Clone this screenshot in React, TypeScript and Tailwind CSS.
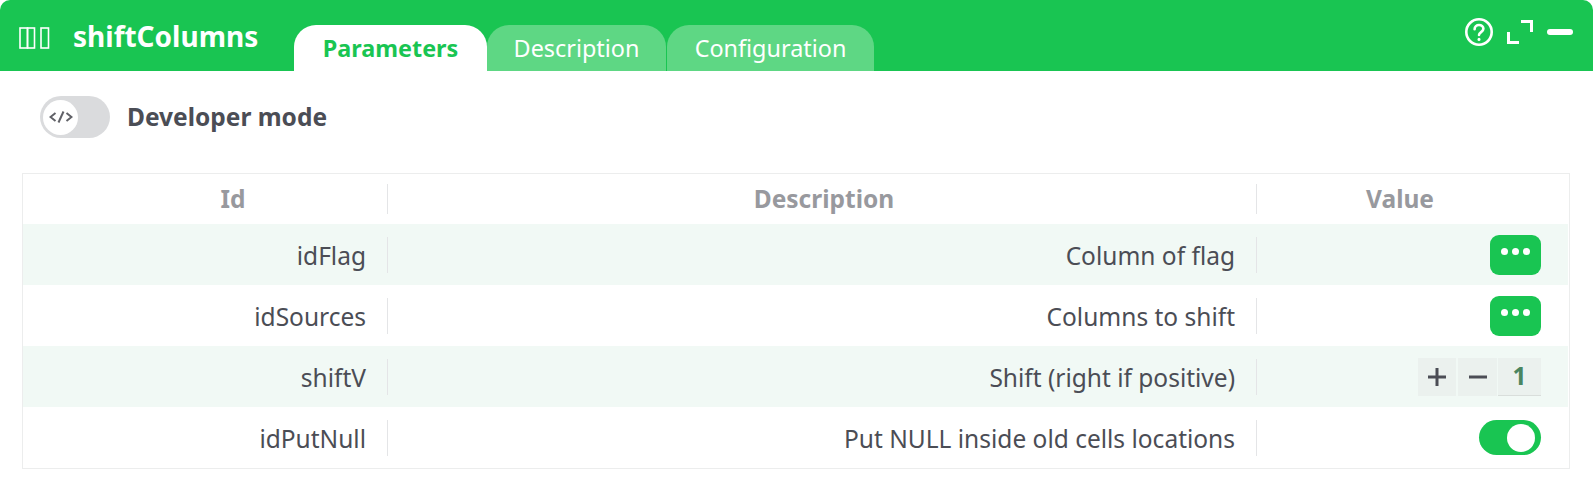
import React from "react";

const font = { fontFamily: '"Noto Sans", sans-serif' };

function Row({ id, desc, shaded, children }: { id: string; desc: string; shaded?: boolean; children: React.ReactNode }) {
  return (
    <div className={`mr-px flex h-[61px] items-center text-[24.5px] text-[#4b4d55] ${shaded ? "bg-[#f1f9f5]" : "bg-white"}`}>
      <div className="flex h-[36px] w-[365px] items-center justify-end border-r border-[#e4e5e7] pr-[21px] pt-[4px]">{id}</div>
      <div className="flex h-[36px] w-[869px] items-center justify-end border-r border-[#e4e5e7] pr-[21px] pt-[4px]">{desc}</div>
      <div className="flex flex-1 items-center justify-end pr-[27px]">{children}</div>
    </div>
  );
}

function Dots() {
  return (
    <button className="flex h-[40px] w-[51px] items-start justify-center gap-[4px] rounded-[9px] bg-[#19c552] pt-[13px]">
      <span className="h-[7px] w-[7px] rounded-full bg-white" />
      <span className="h-[7px] w-[7px] rounded-full bg-white" />
      <span className="h-[7px] w-[7px] rounded-full bg-white" />
    </button>
  );
}

export default function App() {
  return (
    <div className="h-[488px] w-[1593px] overflow-hidden bg-white" style={font}>
      <div className="flex h-[71px] items-end rounded-t-[10px] bg-[#19c552] pr-[20px]">
        <div className="flex h-full w-[294px] items-center pl-[18px] pt-[4px]">
          <svg width="32" height="24" viewBox="0 0 32 24" fill="none" stroke="white" strokeWidth="1.6">
            <rect x="2" y="2" width="7.5" height="20" />
            <rect x="9.5" y="2" width="7" height="20" />
            <rect x="23" y="2" width="7.5" height="20" />
          </svg>
          <span className="ml-[23px] -translate-y-[2px] text-[28px] font-bold text-white">shiftColumns</span>
        </div>
        <div className="flex h-[46px] w-[193px] items-center justify-center rounded-t-[22px] bg-white pt-[2px] text-[23.4px] font-bold text-[#19c552]">Parameters</div>
        <div className="flex h-[46px] w-[179px] items-center justify-center rounded-t-[22px] bg-[#5ed784] pt-[2px] text-[23.4px] text-white">Description</div>
        <div className="ml-px flex h-[46px] w-[207px] items-center justify-center rounded-t-[22px] bg-[#5ed784] pt-[2px] text-[23.4px] text-white">Configuration</div>
        <div className="flex h-full flex-1 items-start justify-end pt-[17px]">
          <svg width="30" height="30" viewBox="0 0 30 30" fill="none" stroke="white" strokeWidth="2.6" strokeLinecap="round">
            <circle cx="15" cy="15" r="12.7" />
            <path d="M10.6 12.2c0-2.6 2-4.2 4.4-4.2s4.4 1.5 4.4 3.8c0 3.4-4.4 3.2-4.4 6.2" />
            <path d="M15 22.3v.2" strokeWidth="3" />
          </svg>
          <svg width="26" height="24" viewBox="0 0 26 24" fill="none" stroke="white" strokeWidth="3" className="ml-[13px] mt-[3px]">
            <path d="M14 1.5h10.5V12" />
            <path d="M1.5 12v10.5H12" />
          </svg>
          <div className="ml-[14px] mt-[12px] h-[6px] w-[26px] rounded-full bg-white" />
        </div>
      </div>

      <div className="flex h-[102px] items-start pl-[40px] pt-[25px]">
        <div className="flex h-[42px] w-[70px] items-center rounded-full bg-[#dadbdd] pl-[3px]">
          <div className="flex h-[35px] w-[35px] items-center justify-center rounded-full bg-white">
            <svg width="24" height="14" viewBox="0 0 24 14" fill="none" stroke="#606167" strokeWidth="2">
              <path d="M6.5 3L1.5 7l5 4" />
              <path d="M14.5 1.5l-5 11" />
              <path d="M17.5 3l5 4-5 4" />
            </svg>
          </div>
        </div>
        <span className="ml-[17px] text-[24.5px] leading-[42px] font-bold text-[#4b4d55]">Developer mode</span>
      </div>

      <div className="mx-[22px] w-[1548px] border border-[#eceded]">
        <div className="flex h-[50px] items-center text-[24.5px] font-bold text-[#98999e]">
          <div className="flex h-[30px] w-[365px] items-center justify-center border-r border-[#e4e5e7] pl-[56px]">Id</div>
          <div className="flex h-[30px] w-[869px] items-center justify-center border-r border-[#e4e5e7] pl-[4px]">Description</div>
          <div className="flex flex-1 items-center justify-center pr-[26px]">Value</div>
        </div>
        <Row id="idFlag" desc="Column of flag" shaded><Dots /></Row>
        <Row id="idSources" desc="Columns to shift"><Dots /></Row>
        <Row id="shiftV" desc="Shift (right if positive)" shaded>
          <div className="flex h-[38px]">
            <div className="flex w-[38px] items-center justify-center bg-[#ebf1ee]">
              <svg width="18" height="18" viewBox="0 0 18 18" stroke="#4b4d55" strokeWidth="3"><path d="M0 9h18M9 0v18" /></svg>
            </div>
            <div className="ml-[2px] flex w-[39px] items-center justify-center bg-[#ebf1ee]">
              <svg width="18" height="18" viewBox="0 0 18 18" stroke="#4b4d55" strokeWidth="3"><path d="M0 9h18" /></svg>
            </div>
            <div className="ml-px flex w-[43px] items-center justify-center border-b border-[#d9dedb] bg-[#ebf1ee] text-[24.5px] font-bold text-[#4a8560]">1</div>
          </div>
        </Row>
        <Row id="idPutNull" desc="Put NULL inside old cells locations">
          <div className="flex h-[35px] w-[62px] items-center justify-end rounded-full bg-[#19c552] pr-[6px]">
            <div className="h-[28px] w-[28px] rounded-full bg-white" />
          </div>
        </Row>
      </div>
    </div>
  );
}
